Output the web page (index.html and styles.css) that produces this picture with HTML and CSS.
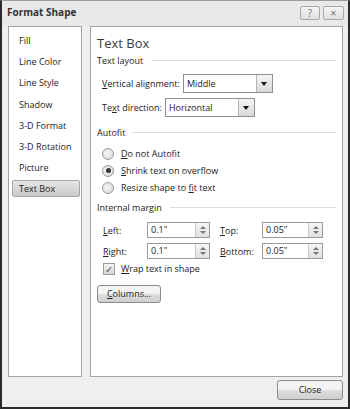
FILE: index.html
```html
<!DOCTYPE html>
<html lang="en">
<head>
    <meta charset="UTF-8">
    <title>Format Shape</title>
    <link rel="stylesheet" href="styles.css">
</head>
<body>
    <div class="window">
      <div class="titlebar">
        <span class="title">Format Shape</span>
        <div class="caption-btns">
          <div class="cap-btn">?</div>
          <div class="cap-btn close-x">&#10005;</div>
        </div>
      </div>

      <div class="main">
        <div class="nav">
          <div class="nav-item">Fill</div>
          <div class="nav-item">Line Color</div>
          <div class="nav-item">Line Style</div>
          <div class="nav-item">Shadow</div>
          <div class="nav-item">3-D Format</div>
          <div class="nav-item">3-D Rotation</div>
          <div class="nav-item">Picture</div>
          <div class="nav-item selected">Text Box</div>
        </div>

        <div class="pane">
          <h2 class="pane-title">Text Box</h2>

          <div class="group-head"><span>Text layout</span><div class="rule"></div></div>
          <div class="field-row first">
            <span><u>V</u>ertical alignment:</span>
            <div class="select">
              <span class="select-value">Middle</span>
              <span class="select-btn"><span class="tri-down"></span></span>
            </div>
          </div>
          <div class="field-row">
            <span>Te<u>x</u>t direction:</span>
            <div class="select">
              <span class="select-value">Horizontal</span>
              <span class="select-btn"><span class="tri-down"></span></span>
            </div>
          </div>

          <div class="group-head autofit"><span>Autofit</span><div class="rule"></div></div>
          <div class="radios">
            <div class="radio-row"><span class="radio"></span><span><u>D</u>o not Autofit</span></div>
            <div class="radio-row"><span class="radio checked"></span><span><u>S</u>hrink text on overflow</span></div>
            <div class="radio-row"><span class="radio"></span><span>Resize shape to <u>fi</u>t text</span></div>
          </div>

          <div class="group-head margin"><span>Internal margin</span><div class="rule"></div></div>
          <div class="spin-grid">
            <span><u>L</u>eft:</span>
            <div class="spin"><span class="spin-value">0.1"</span><span class="spin-btns"><span class="tri-up"></span><span class="tri-dn"></span></span></div>
            <span class="right-label"><u>T</u>op:</span>
            <div class="spin narrow"><span class="spin-value">0.05"</span><span class="spin-btns"><span class="tri-up"></span><span class="tri-dn"></span></span></div>
            <span><u>R</u>ight:</span>
            <div class="spin"><span class="spin-value">0.1"</span><span class="spin-btns"><span class="tri-up"></span><span class="tri-dn"></span></span></div>
            <span class="right-label"><u>B</u>ottom:</span>
            <div class="spin narrow"><span class="spin-value">0.05"</span><span class="spin-btns"><span class="tri-up"></span><span class="tri-dn"></span></span></div>
          </div>

          <div class="check-row">
            <span class="checkbox">&#10003;</span>
            <span><u>W</u>rap text in shape</span>
          </div>

          <div class="btn columns-btn"><u>C</u>olumns...</div>
        </div>
      </div>

      <div class="footer">
        <div class="btn close-btn">Close</div>
      </div>
    </div>
</body>
</html>
```

FILE: styles.css
```css
* {
    margin: 0;
    padding: 0;
    box-sizing: border-box;
}

body {
    font-family: "Open Sans", "Noto Sans", sans-serif;
    font-size: 9px;
    color: #222;
    background: #fff;
}

u {
    text-decoration: underline;
    text-underline-offset: 1px;
}

.window {
    width: 350px;
    height: 409px;
    background: #efefef;
    border: 2px solid #2a2a2a;
    border-top: 1px solid #9a9a9a;
    display: flex;
    flex-direction: column;
}

.titlebar {
    height: 25px;
    display: flex;
    align-items: flex-start;
    justify-content: space-between;
    padding: 3px 4px 0 5px;
    background: #e9e9e9;
}

.title {
    font-weight: bold;
    font-size: 10px;
    color: #333;
    line-height: 16px;
}

.caption-btns {
    display: flex;
    gap: 3px;
    margin-top: 2px;
}

.cap-btn {
    width: 20px;
    height: 14px;
    border: 1px solid #a8a8a8;
    border-radius: 2px;
    background: linear-gradient(#f6f6f6, #dedede);
    color: #777;
    font-size: 10px;
    line-height: 12px;
    text-align: center;
}

.close-x {
    width: 21px;
    font-size: 8px;
}

.main {
    display: flex;
    gap: 8px;
    padding: 0 5px 0 6px;
    height: 351px;
}

.nav {
    width: 74px;
    background: #fff;
    border: 1px solid #a3a3a3;
    padding: 5px 1px 0 3px;
}

.nav-item {
    height: 17px;
    line-height: 17px;
    margin-bottom: 4.2px;
    padding-left: 7px;
    white-space: nowrap;
}

.nav-item.selected {
    background: linear-gradient(#e6e6e6, #c9c9c9);
    border: 1px solid #a6a6a6;
    border-radius: 2px;
    padding-left: 6px;
    line-height: 15px;
}

.pane {
    width: 253px;
    background: #fff;
    border: 1px solid #a3a3a3;
    padding: 7px 6px 0 6px;
}

.pane-title {
    font-weight: normal;
    font-size: 13px;
    line-height: 18px;
    color: #3a3a3a;
}

.group-head {
    display: flex;
    align-items: center;
    gap: 8px;
    height: 14px;
    margin-top: 1px;
}

.rule {
    flex: 1;
    border-top: 1px solid #dcdcdc;
}

.group-head.autofit {
    margin-top: 8px;
}

.group-head.margin {
    margin-top: 4px;
}

.field-row {
    display: flex;
    align-items: center;
    gap: 3px;
    padding-left: 5px;
    margin-top: 5px;
}

.field-row.first {
    margin-top: 7px;
}

.select {
    width: 90px;
    height: 19px;
    border: 1px solid #8e8e8e;
    display: flex;
    align-items: stretch;
    background: #fff;
}

.select-value {
    flex: 1;
    line-height: 17px;
    padding-left: 3px;
}

.select-btn {
    width: 16px;
    border-left: 1px solid #b5b5b5;
    background: linear-gradient(#f4f4f4, #d9d9d9);
    display: flex;
    align-items: center;
    justify-content: center;
}

.tri-down {
    width: 0;
    height: 0;
    border-left: 3.5px solid transparent;
    border-right: 3.5px solid transparent;
    border-top: 4px solid #111;
}

.radios {
    margin-top: 6px;
    padding-left: 5px;
}

.radio-row {
    display: flex;
    align-items: center;
    gap: 7px;
    height: 17px;
}

.radio {
    width: 12px;
    height: 12px;
    border-radius: 50%;
    border: 1px solid #9a9a9a;
    background: radial-gradient(circle at 40% 40%, #f8f8f8, #d2d2d2);
    display: flex;
    align-items: center;
    justify-content: center;
}

.radio.checked::after {
    content: "";
    width: 5px;
    height: 5px;
    border-radius: 50%;
    background: #333;
}

.spin-grid {
    display: grid;
    grid-template-columns: 44px 63px 52px 61px;
    row-gap: 5px;
    align-items: center;
    padding-left: 6px;
    margin-top: 8px;
}

.right-label {
    padding-left: 10px;
}

.spin {
    height: 16px;
    border: 1px solid #9a9a9a;
    display: flex;
    background: #fff;
}

.spin-value {
    flex: 1;
    line-height: 14px;
    padding-left: 3px;
}

.spin-btns {
    width: 14px;
    border-left: 1px solid #c8c8c8;
    background: linear-gradient(#f6f6f6, #e0e0e0);
    display: flex;
    flex-direction: column;
    align-items: center;
    justify-content: center;
    gap: 2px;
}

.tri-up,
.tri-dn {
    width: 0;
    height: 0;
    border-left: 3px solid transparent;
    border-right: 3px solid transparent;
}

.tri-up {
    border-bottom: 3px solid #777;
}

.tri-dn {
    border-top: 3px solid #777;
}

.check-row {
    display: flex;
    align-items: center;
    gap: 6px;
    height: 13px;
    margin-top: 3px;
    padding-left: 6px;
}

.checkbox {
    width: 12px;
    height: 12px;
    border: 1px solid #9a9a9a;
    background: linear-gradient(#f4f4f4, #d8d8d8);
    font-size: 10px;
    line-height: 10px;
    text-align: center;
    color: #555;
}

.btn {
    border: 1px solid #8a8a8a;
    border-radius: 3px;
    background: linear-gradient(#f4f4f4 45%, #dcdcdc 55%, #d0d0d0);
    text-align: center;
}

.columns-btn {
    width: 64px;
    height: 18px;
    line-height: 16px;
    margin-top: 10px;
}

.footer {
    flex: 1;
    display: flex;
    justify-content: flex-end;
    padding: 3px 5px 0 0;
}

.close-btn {
    width: 66px;
    height: 20px;
    line-height: 18px;
}
```
